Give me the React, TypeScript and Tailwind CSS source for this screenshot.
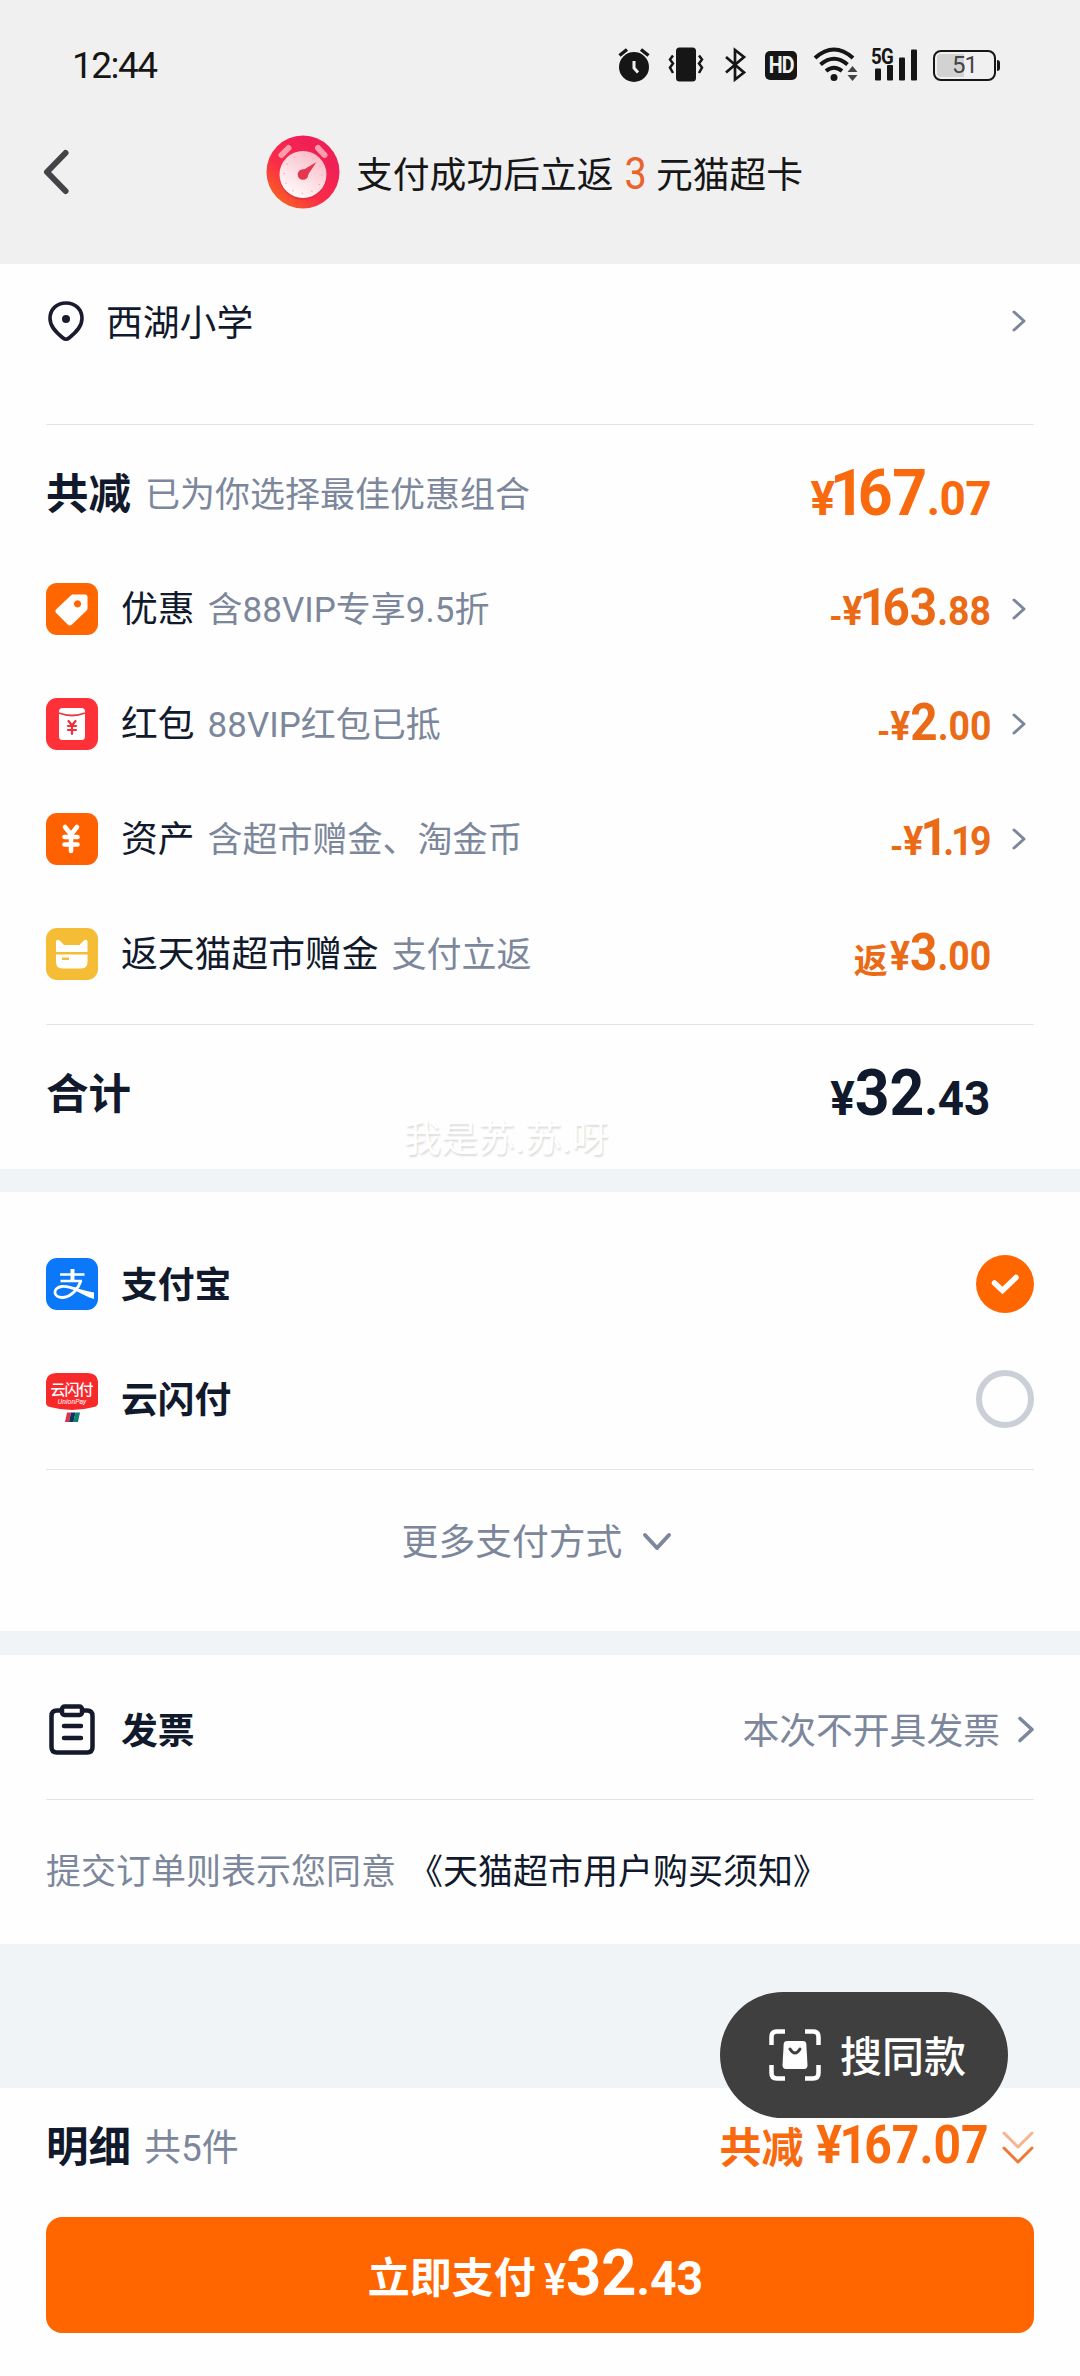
import type { ReactNode } from 'react';
import clsx from 'clsx';

type PriceProps = {
  prefix?: string;
  int: string;
  dec: string;
  size?: 'lg' | 'md';
  className?: string;
};

// the figure 1 sits tighter than the other numerals
const Digits = ({ value, tight = '-ml-[3px] -mr-[3px]' }: { value: string; tight?: string }) => (
  <>
    {value.split('').map((char, i) => (
      <span key={i} className={char === '1' ? tight : undefined}>
        {char}
      </span>
    ))}
  </>
);

const Price = ({ prefix, int, dec, size = 'md', className }: PriceProps) => {
  const lg = size === 'lg';
  const big = lg ? 'text-[65px]' : 'text-[51px]';
  const small = lg ? 'text-[49px]' : 'text-[40px]';
  return (
    <span
      className={clsx(
        'inline-block origin-right scale-x-[0.935] whitespace-nowrap font-bold leading-none',
        lg ? 'mb-[4px]' : 'mb-[3px]',
        className,
      )}
    >
      {prefix && <span className="inline-block translate-y-[4px] text-[36px]">{prefix}</span>}
      <span className={small}>¥</span>
      <span className={big}>
        <Digits value={int} tight={lg ? '-ml-[5px] -mr-[7px]' : '-ml-[3px] -mr-[5px]'} />
      </span>
      <span className={small}>
        .<Digits value={dec} />
      </span>
    </span>
  );
};

const ChevronRight = () => (
  <svg className="h-[22px] w-[14px]" viewBox="0 0 14 22" fill="none" stroke="#7c879b" strokeWidth="3" strokeLinecap="round" strokeLinejoin="round">
    <path d="M2 2 L12 11 L2 20" />
  </svg>
);

const Divider = () => <div className="mx-[46px] h-px bg-[#e1e3e6]" />;

const Tile = ({ color, children }: { color: string; children: ReactNode }) => (
  <div className={clsx('h-[52px] w-[52px] shrink-0 overflow-hidden rounded-[11px]', color)}>{children}</div>
);

const TagIcon = () => (
  <Tile color="bg-[#ff6600]">
    <svg viewBox="0 0 52 52" fill="#fff">
      <path
        fillRule="evenodd"
        d="M27 11.5 h12 a2.5 2.5 0 0 1 2.5 2.5 v11.5 a3 3 0 0 1 -0.9 2.1 L26 41.5 a3 3 0 0 1 -4.3 0 L10.5 30.3 a3 3 0 0 1 0 -4.3 L24.8 12.4 a3 3 0 0 1 2.2 -0.9 Z M31.5 17.3 a3.6 3.6 0 1 0 0.01 0 Z"
      />
    </svg>
  </Tile>
);

const PacketIcon = () => (
  <Tile color="bg-[#fe3038]">
    <svg viewBox="0 0 52 52">
      <rect x="13" y="10" width="26" height="32" rx="3.5" fill="#fff" />
      <path d="M13 15 Q26 20 39 15" fill="none" stroke="#e0404a" strokeWidth="1.8" />
      <path d="M22.5 23 L26 27.5 L29.5 23 M26 27.5 V36 M22 28 H30 M22 32 H30" fill="none" stroke="#f0303a" strokeWidth="2.2" strokeLinecap="round" />
    </svg>
  </Tile>
);

const YuanIcon = () => (
  <Tile color="bg-[#ff6000]">
    <svg viewBox="0 0 52 52" fill="none" stroke="#fff" strokeWidth="4.6" strokeLinecap="round">
      <path d="M19 14 L25 21.5 L31 14 M25 21.5 V38 M18.5 24 H31.5 M18.5 31.5 H31.5" />
    </svg>
  </Tile>
);

const CatCardIcon = () => (
  <Tile color="bg-[#f5bc35]">
    <svg viewBox="0 0 52 52" fill="#fff">
      <path d="M10 24 V14 Q10 11 13 12 Q15 13.5 18 17 H33.5 Q36.5 13.5 38.5 12 Q41.5 11 41.5 14 V24 Z" />
      <path fillRule="evenodd" d="M10 26.5 H41.5 V34 Q41.5 40.5 35 40.5 H16.5 Q10 40.5 10 34 Z M16 29.5 V32 H23 V29.5 Z" />
    </svg>
  </Tile>
);

const AlipayIcon = () => (
  <Tile color="bg-[#0b78fa]">
    <svg viewBox="0 0 52 52" fill="none" stroke="#fff" strokeWidth="2.6">
      <path d="M14 16.5 H38.5 M14.5 23 H36" />
      <path d="M26.5 11 V23" strokeWidth="4" />
      <path d="M35 22.5 C33 29 27 38.5 17 39.5 C7 40 6 30 15.5 28.5 C22 27.7 28 30.5 34 33" strokeWidth="2.8" />
      <path d="M28 29 C35 32 41 33 48 34.5 V41 C41 39 34 35 28 31.5 Z" fill="#fff" stroke="none" />
    </svg>
  </Tile>
);

const UnionPayIcon = () => (
  <svg className="h-[52px] w-[52px] shrink-0" viewBox="0 0 52 52">
    <path d="M0 10 Q0 0 11 0 H41 Q52 0 52 10 V30 Q52 33 48 34 Q26 40 4 34 Q0 33 0 30 Z" fill="#f8292b" />
    <text x="26" y="21.5" textAnchor="middle" fontSize="15" fontWeight="500" fill="#fff" textLength="43" fontFamily="Noto Sans CJK SC, sans-serif">云闪付</text>
    <text x="26" y="30.5" textAnchor="middle" fontSize="7" fontStyle="italic" fill="#fff" fontFamily="Roboto, sans-serif">UnionPay</text>
    <path d="M21 39.5 H25 L23 49 H19 Z" fill="#d8354a" />
    <path d="M25 39.5 H29.5 L27.5 49 H23 Z" fill="#10345e" />
    <path d="M29.5 39.5 H34 L32 49 H27.5 Z" fill="#0c7f78" />
  </svg>
);

const ClockBadge = () => (
  <svg className="h-[74px] w-[74px]" viewBox="0 0 74 74">
    <defs>
      <linearGradient id="badge" x1="0.1" y1="0.9" x2="0.7" y2="0.2">
        <stop offset="0" stopColor="#f9641f" />
        <stop offset="0.45" stopColor="#fa2c49" />
        <stop offset="1" stopColor="#f01f55" />
      </linearGradient>
      <linearGradient id="dial" x1="0.2" y1="1" x2="0.8" y2="0">
        <stop offset="0" stopColor="#ffffff" />
        <stop offset="1" stopColor="#f9b9c4" />
      </linearGradient>
    </defs>
    <circle cx="37" cy="37" r="36.5" fill="url(#badge)" />
    <path d="M15.5 20 L22.5 13 M52 13 L58.5 20" stroke="#ff9cac" strokeWidth="6" strokeLinecap="round" />
    <circle cx="37" cy="41.5" r="23.5" fill="#c9283a" opacity="0.45" />
    <circle cx="37" cy="39.5" r="23.5" fill="url(#dial)" />
    <circle cx="37" cy="39.5" r="19" fill="none" stroke="#e8a9b2" strokeWidth="1.6" strokeDasharray="1 8.95" />
    <path d="M34.5 36.5 L50.5 27 L40.5 42 Z" fill="#e63750" />
    <circle cx="37" cy="39.5" r="5.3" fill="#e63750" />
  </svg>
);

const StatusBar = () => (
  <div className="flex h-[130px] items-center justify-between pl-[72px] pr-[80px]">
    <span className="text-[37px] leading-none tracking-[-1.5px] text-[#161616]">12:44</span>
    <div className="flex h-9 items-center text-[#161616]">
      <svg className="h-9 w-[34px]" viewBox="0 0 34 36">
        <circle cx="17" cy="20" r="15" fill="currentColor" />
        <path d="M2.5 8.5 L10 2.5 M31.5 8.5 L24 2.5" stroke="currentColor" strokeWidth="3.5" />
        <path d="M17 14 V21 L21 25.5" fill="none" stroke="#f0f0f0" strokeWidth="3" />
      </svg>
      <svg className="ml-[17px] h-9 w-9" viewBox="0 0 36 36">
        <rect x="8" y="0.5" width="20" height="34" rx="3.5" fill="currentColor" />
        <path d="M5 8.5 L2 12.5 L5 16.5 L2 20.5 L5 26 M31 8.5 L34 12.5 L31 16.5 L34 20.5 L31 26" fill="none" stroke="currentColor" strokeWidth="2.5" />
      </svg>
      <svg className="ml-[20px] h-9 w-[24px]" viewBox="0 0 24 36" fill="none" stroke="currentColor" strokeWidth="2.7">
        <path d="M2 10 L20 25.5 L11 32.5 V3 L20 10 L2 25.5" />
      </svg>
      <div className="ml-[17px] flex h-[29px] w-[32px] items-center justify-center rounded-[5px] bg-[#161616] text-[24px] font-bold leading-none tracking-[-1px] text-[#f0f0f0]">
        <span className="scale-x-[0.82]">HD</span>
      </div>
      <svg className="ml-[16px] h-9 w-[46px]" viewBox="0 0 46 36">
        <g fill="none" stroke="currentColor" strokeWidth="4">
          <path d="M2 11 Q21 -6 40 11" />
          <path d="M7.5 17.5 Q21 6 34.5 17.5" />
          <path d="M13 24 Q21 17.5 29 24" />
        </g>
        <circle cx="21" cy="30.5" r="3.5" fill="currentColor" />
        <path d="M34.5 25 L39.5 19 L44.5 25 Z M34.5 28 L39.5 34 L44.5 28 Z" fill="#444" />
      </svg>
      <div className="relative ml-[12px] h-9 w-[48px]">
        <span className="absolute left-0 -top-[1px] origin-left scale-x-[0.85] text-[22px] font-bold leading-none tracking-[-1px]">5G</span>
        <svg className="h-9 w-[48px]" viewBox="0 0 48 36" fill="currentColor">
          <rect x="4" y="21.5" width="6" height="12" rx="1" />
          <rect x="16" y="18" width="6" height="15.5" rx="1" />
          <rect x="28" y="10.5" width="6" height="23" rx="1" />
          <rect x="40" y="2.5" width="6" height="31" rx="1" />
        </svg>
      </div>
      <div className="ml-[14px] flex items-center">
        <div className="flex h-[31px] w-[63px] items-center rounded-[8px] border-2 border-[#161616] p-[2px]">
          <div className="relative flex h-full w-full items-center justify-center">
            <div className="absolute left-0 h-full w-[27px] rounded-l-[4px] bg-[#d2d2d2]" />
            <span className="relative text-[24px] leading-none tracking-[-1px] text-[#444]">51</span>
          </div>
        </div>
        <div className="ml-[1px] h-[11px] w-[3px] rounded-r-sm bg-[#161616]" />
      </div>
    </div>
  </div>
);

const Header = () => (
  <div className="flex h-[134px] items-start px-[42px]">
    <svg className="mt-[18px] h-[48px] w-[28px]" viewBox="0 0 28 48" fill="none" stroke="#444448" strokeWidth="6" strokeLinecap="round" strokeLinejoin="round">
      <path d="M23.5 5 L5 24 L23.5 43" />
    </svg>
    <div className="ml-[196px] flex items-center pt-[5px]">
      <ClockBadge />
      <div className="ml-[16px] mt-[8px] flex items-center text-[36.8px] leading-none text-[#161616]">
        <span>支付成功后立返</span>
        <span className="ml-[9px] mr-[8px] -mt-[6px] origin-center scale-x-[0.88] text-[45px] text-[#e9632a]">3</span>
        <span>元猫超卡</span>
      </div>
    </div>
  </div>
);

type DiscountRowProps = {
  icon: ReactNode;
  label: string;
  note: string;
  price: ReactNode;
  arrow?: boolean;
};

const DiscountRow = ({ icon, label, note, price, arrow = true }: DiscountRowProps) => (
  <div className="flex h-[115px] items-center px-[46px]">
    {icon}
    <span className="ml-[23px] mt-[4px] text-[36.8px] leading-none">{label}</span>
    <span className="ml-[13px] mt-[4px] text-[35px] leading-none text-[#7c879b]">{note}</span>
    <div className="ml-auto flex items-center">
      {price}
      <div className="ml-[21px] flex w-[22px] justify-start">{arrow && <ChevronRight />}</div>
    </div>
  </div>
);

const PayRow = ({ icon, label, checked }: { icon: ReactNode; label: string; checked?: boolean }) => (
  <div className="flex h-[115px] items-center px-[46px]">
    {icon}
    <span className="ml-[23px] mt-[5px] text-[36.8px] font-bold leading-none">{label}</span>
    {checked ? (
      <svg className="ml-auto h-[58px] w-[58px]" viewBox="0 0 58 58">
        <circle cx="29" cy="29" r="29" fill="#ff6600" />
        <path d="M18.5 28 L26.5 35.5 L40 22.5" fill="none" stroke="#fff" strokeWidth="5.5" strokeLinecap="round" />
      </svg>
    ) : (
      <div className="ml-auto h-[58px] w-[58px] rounded-full border-[6px] border-[#cbd0d8]" />
    )}
  </div>
);

const App = () => {
  return (
    <div
      className="relative flex h-[2376px] w-[1080px] flex-col overflow-hidden bg-[#f0f4f7] text-[#11192c]"
      style={{ fontFamily: 'Roboto, "Noto Sans CJK SC", sans-serif' }}
    >
      <div className="bg-[#f0f0f0]">
        <StatusBar />
        <Header />
      </div>

      {/* Address + discounts */}
      <section className="relative h-[905px] bg-[#fefefe]">
        <div className="flex h-[160px] items-start px-[46px] pt-[36px]">
          <svg className="h-[42px] w-[40px]" viewBox="0 0 40 42">
            <path d="M20 3 C10.5 3 4 9.5 4 18.5 C4 26 9 31.5 17 38 Q20 40.5 23 38 C31 31.5 36 26 36 18.5 C36 9.5 29.5 3 20 3 Z" fill="none" stroke="#1a1c2e" strokeWidth="3.6" />
            <circle cx="20" cy="19" r="4" fill="#1a1c2e" />
          </svg>
          <span className="ml-[20px] mt-[6px] text-[36.8px] leading-none">西湖小学</span>
          <div className="ml-auto mt-[10px] mr-[8px]">
            <ChevronRight />
          </div>
        </div>
        <Divider />
        <div className="flex h-[126px] items-center pt-[14px] pl-[46px] pr-[89px]">
          <span className="text-[42.5px] font-bold leading-none">共减</span>
          <span className="ml-[14px] text-[35px] leading-none text-[#7c879b]">已为你选择最佳优惠组合</span>
          <Price int="167" dec="07" size="lg" className="ml-auto tracking-[-0.5px] text-[#f9690e]" />
        </div>
        <div>
          <DiscountRow icon={<TagIcon />} label="优惠" note="含88VIP专享9.5折" price={<Price prefix="-" int="163" dec="88" className="text-[#ea6a16]" />} />
          <DiscountRow icon={<PacketIcon />} label="红包" note="88VIP红包已抵" price={<Price prefix="-" int="2" dec="00" className="text-[#ea6a16]" />} />
          <DiscountRow icon={<YuanIcon />} label="资产" note="含超市赠金、淘金币" price={<Price prefix="-" int="1" dec="19" className="text-[#ea6a16]" />} />
          <DiscountRow
            icon={<CatCardIcon />}
            label="返天猫超市赠金"
            note="支付立返"
            arrow={false}
            price={
              <div className="flex items-center text-[#ea6a16]">
                <span className="mt-[14px] text-[34px] font-bold leading-none">返</span>
                <Price int="3" dec="00" className="-ml-[5px]" />
              </div>
            }
          />
        </div>
        <div className="h-[13px]" />
        <Divider />
        <div className="flex h-[140px] items-center pl-[46px] pr-[90px]">
          <span className="text-[42.5px] font-bold leading-none">合计</span>
          <Price int="32" dec="43" size="lg" className="ml-auto" />
        </div>
        <span className="absolute left-[404px] top-[857px] whitespace-nowrap text-[37px] leading-none text-white [text-shadow:1px_2px_2px_rgba(0,0,0,0.14)]">
          我是苏.苏.呀
        </span>
      </section>

      {/* Payment methods */}
      <section className="mt-[23px] h-[439px] bg-[#fefefe] pt-[34px]">
        <PayRow icon={<AlipayIcon />} label="支付宝" checked />
        <PayRow icon={<UnionPayIcon />} label="云闪付" />
        <div className="h-[13px]" />
        <Divider />
        <div className="flex h-[144px] items-center justify-center pr-[6px]">
          <span className="mt-[2px] text-[36.8px] leading-none text-[#7c879b]">更多支付方式</span>
          <svg className="ml-[20px] h-[20px] w-[30px]" viewBox="0 0 30 20" fill="none" stroke="#7c879b" strokeWidth="4" strokeLinecap="round" strokeLinejoin="round">
            <path d="M3 3 L15 16 L27 3" />
          </svg>
        </div>
      </section>

      {/* Invoice */}
      <section className="mt-[24px] h-[289px] bg-[#fefefe]">
        <div className="flex h-[144px] items-center px-[46px] pt-[5px]">
          <svg className="h-[52px] w-[52px]" viewBox="0 0 52 52" fill="none" stroke="#141a2c" strokeWidth="4.5" strokeLinecap="round">
            <path d="M14 6.5 H11 Q5.5 6.5 5.5 12 V43 Q5.5 48.5 11 48.5 H41 Q46.5 48.5 46.5 43 V12 Q46.5 6.5 41 6.5 H38" />
            <rect x="16" y="2.5" width="20" height="8.5" rx="2.5" />
            <path d="M18 22 H35 M18 34 H35" />
          </svg>
          <span className="ml-[23px] mt-[6px] text-[36.8px] font-bold leading-none">发票</span>
          <span className="ml-auto mt-[6px] text-[36.8px] leading-none text-[#7c879b]">本次不开具发票</span>
          <svg className="ml-[16px] h-[28px] w-[18px]" viewBox="0 0 18 28" fill="none" stroke="#7c879b" strokeWidth="3.6" strokeLinecap="round" strokeLinejoin="round">
            <path d="M4 2.5 L16 13.5 L4 24.5" />
          </svg>
        </div>
        <Divider />
        <div className="flex h-[144px] items-center px-[46px] text-[35px] leading-none">
          <span className="text-[#7c879b]">提交订单则表示您同意</span>
          <span className="ml-[12px]">《天猫超市用户购买须知》</span>
        </div>
      </section>

      {/* Bottom bar */}
      <footer className="mt-auto h-[288px] bg-[#fefefe] px-[46px]">
        <div className="flex h-[129px] items-center pb-[8px]">
          <span className="text-[42.5px] font-bold leading-none">明细</span>
          <span className="ml-[13px] text-[37px] leading-none text-[#7c879b]">共5件</span>
          <div className="ml-auto flex items-center font-bold leading-none text-[#f9690e]">
            <span className="text-[42px]">共减</span>
            <span className="mb-[8px] -ml-[8px] inline-block origin-right scale-x-[0.89] text-[54px]">
              ¥<Digits value="167.07" />
            </span>
            <svg className="ml-[13px] h-[36px] w-[32px]" viewBox="0 0 32 36" fill="none" stroke="#ee7838" strokeWidth="3" strokeLinecap="round" strokeLinejoin="round">
              <path d="M2 2 L16 16 L30 2" opacity="0.55" />
              <path d="M2 17 L16 31 L30 17" />
            </svg>
          </div>
        </div>
        <button className="flex h-[116px] w-full items-center justify-center rounded-[16px] bg-[#ff6600] font-bold leading-none text-white">
          <span className="mt-[8px] text-[42px]">立即支付</span>
          <span className="mb-[4px] ml-[8px] inline-block origin-left scale-x-[0.945] whitespace-nowrap">
            <span className="text-[44px] font-medium">¥</span>
            <span className="text-[65px]">32</span>
            <span className="text-[49px]">.43</span>
          </span>
        </button>
      </footer>

      <div className="absolute left-[720px] top-[1992px] flex h-[126px] w-[288px] items-center rounded-full bg-[#3f3f3f] pl-[48px] text-white">
        <svg className="h-[54px] w-[54px]" viewBox="0 0 54 54">
          <path d="M3.5 17 V9 Q3.5 3.5 9 3.5 H17 M37 3.5 H45 Q50.5 3.5 50.5 9 V17 M50.5 37 V45 Q50.5 50.5 45 50.5 H37 M17 50.5 H9 Q3.5 50.5 3.5 45 V37" fill="none" stroke="#fff" strokeWidth="4.5" />
          <path d="M19 13 H35 Q38 13 38.3 16 L39.5 37 Q39.5 41 36 41 H18 Q14.5 41 14.5 37 L15.7 16 Q16 13 19 13 Z" fill="#fff" />
          <path d="M22 21 Q27 29 32 21" fill="none" stroke="#3f3f3f" strokeWidth="3" strokeLinecap="round" />
        </svg>
        <span className="ml-[18px] mt-[5px] text-[42px] font-medium leading-none">搜同款</span>
      </div>
    </div>
  );
};

export default App;
